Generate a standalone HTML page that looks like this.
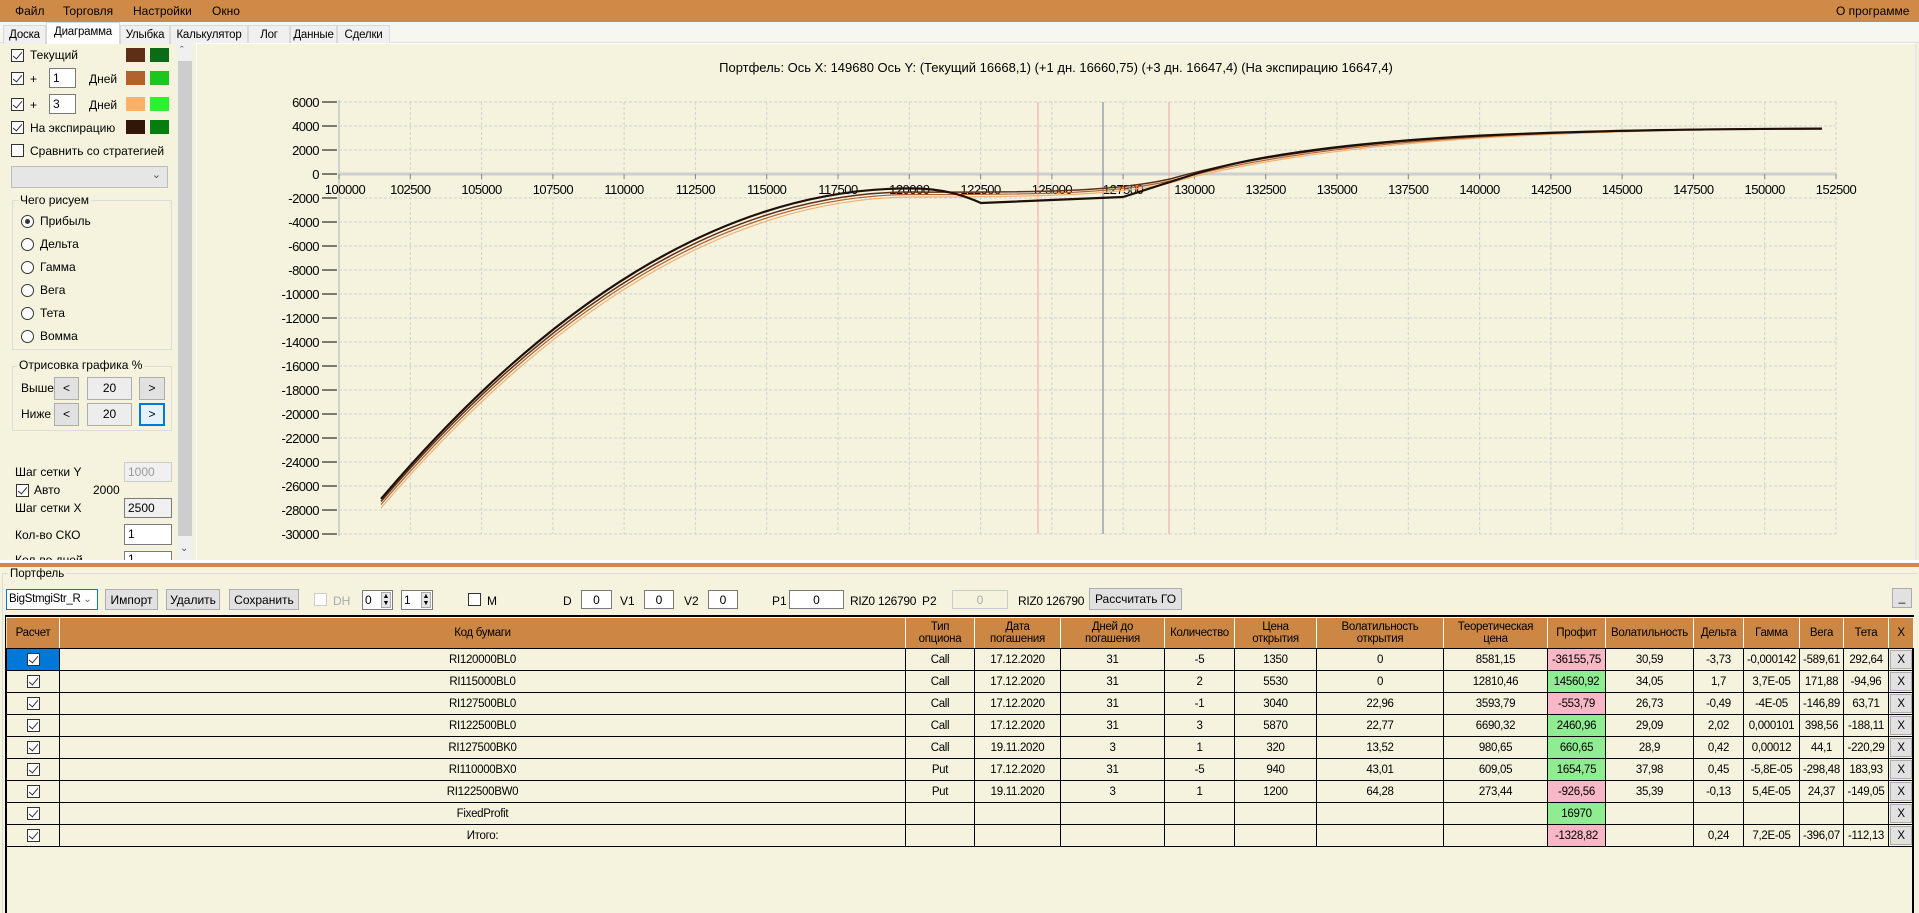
<!DOCTYPE html>
<html><head><meta charset="utf-8">
<style>
*{box-sizing:border-box;margin:0;padding:0}
body{width:1919px;height:913px;overflow:hidden;background:#F5F3DE;font-family:"Liberation Sans",sans-serif;font-size:12px;color:#000;position:relative}
.a{position:absolute;white-space:nowrap}
.menu{left:0;top:0;width:1919px;height:22px;background:#CF8A47}
.menu span{position:absolute;top:4px;font-size:12px}
.tabs{left:0;top:22px;width:1919px;height:21px;background:#F7F7F2;border-bottom:1px solid #ddd}
.tab{position:absolute;top:3px;height:19px;background:#F0F0F0;border:1px solid #d9d9d9;border-bottom:none;padding:3px 0 0;font-size:11.5px;text-align:center;letter-spacing:-0.2px;overflow:hidden}
.tab.act{top:0;height:22px;background:#fff;padding-top:3px}
.cb{position:absolute;width:13px;height:13px;border:1px solid #333;background:#fff}
.cb.k::after{content:"";position:absolute;left:3px;top:0px;width:4px;height:8px;border:solid #333;border-width:0 1.5px 1.5px 0;transform:rotate(40deg)}
.sw{position:absolute;width:19px;height:14px}
.in{position:absolute;background:#fff;border:1px solid #7a7a7a;font-size:12px;padding:2px 3px}
.rd{position:absolute;width:13px;height:13px;border:1px solid #333;border-radius:50%;background:#fff}
.btn{position:absolute;background:#E1E1E1;border:1px solid #ADADAD;text-align:center;font-size:12px;padding-top:3px}
.grp{position:absolute;border:1px solid #dcdcdc}
.lg{position:absolute;background:#F5F3DE;padding:0 2px;font-size:12px}
table{border-collapse:collapse;table-layout:fixed;font-size:11.5px;letter-spacing:-0.3px}
td,th{border:1px solid #000;text-align:center;height:22px;padding:0;overflow:hidden;white-space:nowrap}
th{background:#CD8744;font-weight:normal;height:31px;line-height:12px;border-color:#fff #fff #000 #f0d0b0}
td .c{display:inline-block;width:13px;height:13px;border:1px solid #333;background:#fff;position:relative;vertical-align:middle}
td .c::after{content:"";position:absolute;left:3px;top:0;width:4px;height:8px;border:solid #333;border-width:0 1.5px 1.5px 0;transform:rotate(40deg)}
.pk{background:#F7B7C4}.gr{background:#90EC90}
td.x{padding:1px}
td.x div{background:#E1E1E1;border:1px solid #ADADAD;height:19px;line-height:18px}
</style></head><body>
<div class="a menu"><span style="left:15px">Файл</span><span style="left:63px">Торговля</span><span style="left:133px">Настройки</span><span style="left:212px">Окно</span><span style="left:1836px">О программе</span></div>
<div class="a tabs">
<div class="tab" style="left:3px;width:43px">Доска</div>
<div class="tab act" style="left:46px;width:74px">Диаграмма</div>
<div class="tab" style="left:120px;width:50px">Улыбка</div>
<div class="tab" style="left:170px;width:78px">Калькулятор</div>
<div class="tab" style="left:248px;width:42px">Лог</div>
<div class="tab" style="left:290px;width:47px">Данные</div>
<div class="tab" style="left:337px;width:53px">Сделки</div>
</div>
<div class="a" style="left:196px;top:43px;width:1721px;height:518px;border:1px solid #fff;border-right:2px solid #e8e8e8"></div>
<div class="cb k" style="left:11px;top:49px"></div><div class="a" style="left:30px;top:48px">Текущий</div>
<div class="sw" style="left:126px;top:48px;background:#5E2F17"></div><div class="sw" style="left:150px;top:48px;background:#0C6B16"></div>
<div class="cb k" style="left:11px;top:72px"></div><div class="a" style="left:30px;top:72px">+</div>
<div class="in" style="left:49px;top:68px;width:27px;height:20px">1</div><div class="a" style="left:89px;top:72px">Дней</div>
<div class="sw" style="left:126px;top:71px;background:#B1622D"></div><div class="sw" style="left:150px;top:71px;background:#1DC51F"></div>
<div class="cb k" style="left:11px;top:98px"></div><div class="a" style="left:30px;top:98px">+</div>
<div class="in" style="left:49px;top:94px;width:27px;height:20px">3</div><div class="a" style="left:89px;top:98px">Дней</div>
<div class="sw" style="left:126px;top:97px;background:#FBB168"></div><div class="sw" style="left:150px;top:97px;background:#2BF22E"></div>
<div class="cb k" style="left:11px;top:121px"></div><div class="a" style="left:30px;top:121px">На экспирацию</div>
<div class="sw" style="left:126px;top:120px;background:#311707"></div><div class="sw" style="left:150px;top:120px;background:#067E0F"></div>
<div class="cb" style="left:11px;top:144px"></div><div class="a" style="left:30px;top:144px">Сравнить со стратегией</div>
<div class="a" style="left:11px;top:166px;width:157px;height:22px;background:#E6E6E6;border:1px solid #bdbdbd"><span style="position:absolute;right:6px;top:1px;font-size:11px;color:#555">&#8964;</span></div>
<div class="grp" style="left:12px;top:200px;width:160px;height:150px"></div><div class="lg" style="left:18px;top:193px">Чего рисуем</div>
<div class="rd" style="left:21px;top:215px"><div style="position:absolute;left:3px;top:3px;width:5px;height:5px;border-radius:50%;background:#333"></div></div><div class="a" style="left:40px;top:214px">Прибыль</div>
<div class="rd" style="left:21px;top:238px"></div><div class="a" style="left:40px;top:237px">Дельта</div>
<div class="rd" style="left:21px;top:261px"></div><div class="a" style="left:40px;top:260px">Гамма</div>
<div class="rd" style="left:21px;top:284px"></div><div class="a" style="left:40px;top:283px">Вега</div>
<div class="rd" style="left:21px;top:307px"></div><div class="a" style="left:40px;top:306px">Тета</div>
<div class="rd" style="left:21px;top:330px"></div><div class="a" style="left:40px;top:329px">Вомма</div>
<div class="grp" style="left:12px;top:366px;width:160px;height:65px"></div><div class="lg" style="left:17px;top:358px">Отрисовка графика %</div>
<div class="a" style="left:21px;top:381px">Выше</div>
<div class="btn" style="left:54px;top:377px;width:25px;height:23px">&lt;</div>
<div class="btn" style="left:87px;top:377px;width:45px;height:23px;background:#EDEDED">20</div>
<div class="btn" style="left:139px;top:377px;width:26px;height:23px">&gt;</div>
<div class="a" style="left:21px;top:407px">Ниже</div>
<div class="btn" style="left:54px;top:403px;width:25px;height:23px">&lt;</div>
<div class="btn" style="left:87px;top:403px;width:45px;height:23px;background:#EDEDED">20</div>
<div class="btn" style="left:139px;top:403px;width:26px;height:23px;border:2px solid #0078D7;background:#E5F1FB;padding-top:2px">&gt;</div>
<div class="a" style="left:15px;top:465px">Шаг сетки Y</div>
<div class="in" style="left:124px;top:462px;width:48px;height:20px;background:#F0F0F0;border-color:#ccc;color:#999">1000</div>
<div class="cb k" style="left:16px;top:484px"></div><div class="a" style="left:34px;top:483px">Авто</div><div class="a" style="left:93px;top:483px">2000</div>
<div class="a" style="left:15px;top:501px">Шаг сетки X</div>
<div class="in" style="left:124px;top:498px;width:48px;height:20px;background:#F0F0F0">2500</div>
<div class="a" style="left:15px;top:528px">Кол-во СКО</div>
<div class="in" style="left:124px;top:524px;width:48px;height:21px">1</div>
<div class="a" style="left:15px;top:553px;height:7px;overflow:hidden">Кол-во дней</div>
<div class="in" style="left:124px;top:551px;width:48px;height:9px;border-bottom:none;padding-top:0;overflow:hidden;line-height:14px">1</div>
<div class="a" style="left:177px;top:43px;width:16px;height:517px;background:#F0F0F0"></div>
<div class="a" style="left:178px;top:61px;width:14px;height:475px;background:#CDCDCD"></div>
<div class="a" style="left:180px;top:45px;font-size:11px;color:#555">&#710;</div>
<div class="a" style="left:180px;top:543px;font-size:10px;color:#555">&#8964;</div>
<div class="a" style="left:0;top:560px;width:1919px;height:3px;background:#fff"></div>
<div class="a" style="left:0;top:563px;width:1919px;height:4px;background:#CF8A47"></div>
<svg class="a" style="left:0;top:0" width="1919" height="560" font-family="Liberation Sans, sans-serif" font-size="13">
<text x="1056" y="72" text-anchor="middle" font-size="13">Портфель: Ось X: 149680 Ось Y:  (Текущий 16668,1)  (+1 дн. 16660,75)  (+3 дн. 16647,4)  (На экспирацию 16647,4)</text>
<g stroke="#d0d0d0" stroke-dasharray="3,2" stroke-width="1">
<path d="M339 102H1836M339 126H1836M339 150H1836M339 198H1836M339 222H1836M339 246H1836M339 270H1836M339 294H1836M339 318H1836M339 342H1836M339 366H1836M339 390H1836M339 414H1836M339 438H1836M339 462H1836M339 486H1836M339 510H1836M339 534H1836"/>
<path d="M410.3 102V534M481.6 102V534M552.9 102V534M624.1 102V534M695.4 102V534M766.7 102V534M838 102V534M909.3 102V534M980.6 102V534M1051.9 102V534M1123.1 102V534M1194.4 102V534M1265.7 102V534M1337 102V534M1408.3 102V534M1479.6 102V534M1550.9 102V534M1622.1 102V534M1693.4 102V534M1764.7 102V534M1836 102V534"/>
</g>
<path d="M339 174H1836" stroke="#cfcfcf" stroke-width="3"/>
<path d="M339 100V536" stroke="#d0d0d0" stroke-width="2"/>
<g stroke="#000"><path d="M322 102H337M322 126H337M322 150H337M322 174H337M322 198H337M322 222H337M322 246H337M322 270H337M322 294H337M322 318H337M322 342H337M322 366H337M322 390H337M322 414H337M322 438H337M322 462H337M322 486H337M322 510H337M322 534H337"/>
<path d="M339 174v5M410.3 174v5M481.6 174v5M552.9 174v5M624.1 174v5M695.4 174v5M766.7 174v5M838 174v5M909.3 174v5M980.6 174v5M1051.9 174v5M1123.1 174v5M1194.4 174v5M1265.7 174v5M1337 174v5M1408.3 174v5M1479.6 174v5M1550.9 174v5M1622.1 174v5M1693.4 174v5M1764.7 174v5M1836 174v5" stroke="#888"/></g>
<g text-anchor="end" letter-spacing="-0.5">
<text x="319" y="107">6000</text><text x="319" y="131">4000</text><text x="319" y="155">2000</text><text x="319" y="179">0</text><text x="319" y="203">-2000</text><text x="319" y="227">-4000</text><text x="319" y="251">-6000</text><text x="319" y="275">-8000</text><text x="319" y="299">-10000</text><text x="319" y="323">-12000</text><text x="319" y="347">-14000</text><text x="319" y="371">-16000</text><text x="319" y="395">-18000</text><text x="319" y="419">-20000</text><text x="319" y="443">-22000</text><text x="319" y="467">-24000</text><text x="319" y="491">-26000</text><text x="319" y="515">-28000</text><text x="319" y="539">-30000</text>
</g>
<g text-anchor="middle" letter-spacing="-0.5">
<text x="345" y="194">100000</text><text x="410.3" y="194">102500</text><text x="481.6" y="194">105000</text><text x="552.9" y="194">107500</text><text x="624.1" y="194">110000</text><text x="695.4" y="194">112500</text><text x="766.7" y="194">115000</text><text x="838" y="194">117500</text><text x="909.3" y="194">120000</text><text x="980.6" y="194">122500</text><text x="1051.9" y="194">125000</text><text x="1123.1" y="194">127500</text><text x="1194.4" y="194">130000</text><text x="1265.7" y="194">132500</text><text x="1337" y="194">135000</text><text x="1408.3" y="194">137500</text><text x="1479.6" y="194">140000</text><text x="1550.9" y="194">142500</text><text x="1622.1" y="194">145000</text><text x="1693.4" y="194">147500</text><text x="1764.7" y="194">150000</text><text x="1836" y="194">152500</text>
</g>
<path d="M1038 102V534M1169 102V534" stroke="#F0A0A0" stroke-width="1"/>
<path d="M1103 102V534" stroke="#6A7A9A" stroke-width="1"/>
<g fill="none" stroke-linejoin="round">
<path stroke="#F4B070" stroke-width="1.2" d="M381,508 Q648,197 915,197 C1060,197 1120,194 1170,183 C1230,166 1330,148 1480,138 C1600,131 1720,129 1822,129"/>
<path stroke="#B06030" stroke-width="1.2" d="M381,504.5 Q647,194.5 913,194.5 C1060,195 1120,192 1170,181 C1230,164 1330,146 1480,137 C1600,130 1720,129 1822,129"/>
<path stroke="#5E2F17" stroke-width="1.5" d="M381,501.5 Q646,192 911,192 C1060,193 1120,190 1170,179 C1230,162 1330,144 1480,136 C1600,130 1720,129 1822,128.5"/>
<path stroke="#1E1008" stroke-width="2.2" d="M381,498.9 Q645.2,188.4 909.4,188.4 C945,188.4 965,196 981,203 L1123,197 L1195,174 C1250,157 1340,143 1480,135.6 C1600,130 1720,129 1822,128.6"/>
</g>
</svg>
<div class="a" style="left:2px;top:573px;width:1915px;height:340px;border-top:1px solid #dcdcdc;border-left:1px solid #dcdcdc"></div>
<div class="a" style="left:8px;top:568px;background:#F5F3DE;padding:0 2px;font-size:11.5px">Портфель</div>
<div class="a" style="left:6px;top:589px;width:92px;height:21px;background:#fff;border:1px solid #0078D7;padding:3px 2px;font-size:11.5px;letter-spacing:-0.3px">BigStmgiStr_R <span style="color:#666;font-size:10px">&#8964;</span></div>
<div class="btn" style="left:105px;top:589px;width:53px;height:21px">Импорт</div>
<div class="btn" style="left:166px;top:589px;width:54px;height:21px">Удалить</div>
<div class="btn" style="left:229px;top:589px;width:70px;height:21px">Сохранить</div>
<div class="cb" style="left:314px;top:593px;border-color:#ccc"></div><div class="a" style="left:333px;top:594px;color:#aaa">DH</div>
<div class="in" style="left:362px;top:590px;width:31px;height:20px;padding:2px">0</div><div class="a" style="left:381px;top:592px;width:10px;height:16px;background:#e6e6e6;border:1px solid #aaa;font-size:7px;line-height:7px;text-align:center">▲<br>▼</div>
<div class="in" style="left:401px;top:590px;width:32px;height:20px;padding:2px">1</div><div class="a" style="left:421px;top:592px;width:10px;height:16px;background:#e6e6e6;border:1px solid #aaa;font-size:7px;line-height:7px;text-align:center">▲<br>▼</div>
<div class="cb" style="left:468px;top:593px"></div><div class="a" style="left:487px;top:594px">M</div>
<div class="a" style="left:563px;top:594px">D</div><div class="in" style="left:581px;top:590px;width:31px;height:19px;text-align:center;padding-top:2px">0</div>
<div class="a" style="left:620px;top:594px">V1</div><div class="in" style="left:644px;top:590px;width:30px;height:19px;text-align:center;padding-top:2px">0</div>
<div class="a" style="left:684px;top:594px">V2</div><div class="in" style="left:708px;top:590px;width:30px;height:19px;text-align:center;padding-top:2px">0</div>
<div class="a" style="left:772px;top:594px">P1</div><div class="in" style="left:789px;top:590px;width:55px;height:19px;text-align:center;padding-top:2px">0</div>
<div class="a" style="left:850px;top:594px;letter-spacing:-0.3px">RIZ0 126790</div><div class="a" style="left:922px;top:594px">P2</div>
<div class="in" style="left:952px;top:590px;width:56px;height:19px;text-align:center;padding-top:2px;border-color:#ccc;color:#aaa;background:#F5F3DE">0</div>
<div class="a" style="left:1018px;top:594px;letter-spacing:-0.3px">RIZ0 126790</div>
<div class="btn" style="left:1089px;top:588px;width:93px;height:22px">Рассчитать ГО</div>
<div class="btn" style="left:1892px;top:588px;width:20px;height:20px;line-height:10px">_</div>
<div class="a" style="left:5px;top:615px;width:1909px;height:298px;border:2px solid #000;border-bottom:none;background:#F5F3DE">
<table style="width:1907px;margin-left:-1px">
<colgroup><col style="width:53px"><col style="width:846px"><col style="width:69px"><col style="width:86px"><col style="width:104px"><col style="width:70px"><col style="width:82px"><col style="width:127px"><col style="width:104px"><col style="width:58px"><col style="width:88px"><col style="width:50px"><col style="width:56px"><col style="width:44px"><col style="width:45px"><col style="width:25px"></colgroup>
<tr><th>Расчет</th><th>Код бумаги</th><th>Тип<br>опциона</th><th>Дата<br>погашения</th><th>Дней до<br>погашения</th><th>Количество</th><th>Цена<br>открытия</th><th>Волатильность<br>открытия</th><th>Теоретическая<br>цена</th><th>Профит</th><th>Волатильность</th><th>Дельта</th><th>Гамма</th><th>Вега</th><th>Тета</th><th>X</th></tr>
<tr><td style="background:#0078D7"><span class="c"></span></td><td>RI120000BL0</td><td>Call</td><td>17.12.2020</td><td>31</td><td>-5</td><td>1350</td><td>0</td><td>8581,15</td><td class="pk">-36155,75</td><td>30,59</td><td>-3,73</td><td>-0,000142</td><td>-589,61</td><td>292,64</td><td class="x"><div>X</div></td></tr>
<tr><td><span class="c"></span></td><td>RI115000BL0</td><td>Call</td><td>17.12.2020</td><td>31</td><td>2</td><td>5530</td><td>0</td><td>12810,46</td><td class="gr">14560,92</td><td>34,05</td><td>1,7</td><td>3,7E-05</td><td>171,88</td><td>-94,96</td><td class="x"><div>X</div></td></tr>
<tr><td><span class="c"></span></td><td>RI127500BL0</td><td>Call</td><td>17.12.2020</td><td>31</td><td>-1</td><td>3040</td><td>22,96</td><td>3593,79</td><td class="pk">-553,79</td><td>26,73</td><td>-0,49</td><td>-4E-05</td><td>-146,89</td><td>63,71</td><td class="x"><div>X</div></td></tr>
<tr><td><span class="c"></span></td><td>RI122500BL0</td><td>Call</td><td>17.12.2020</td><td>31</td><td>3</td><td>5870</td><td>22,77</td><td>6690,32</td><td class="gr">2460,96</td><td>29,09</td><td>2,02</td><td>0,000101</td><td>398,56</td><td>-188,11</td><td class="x"><div>X</div></td></tr>
<tr><td><span class="c"></span></td><td>RI127500BK0</td><td>Call</td><td>19.11.2020</td><td>3</td><td>1</td><td>320</td><td>13,52</td><td>980,65</td><td class="gr">660,65</td><td>28,9</td><td>0,42</td><td>0,00012</td><td>44,1</td><td>-220,29</td><td class="x"><div>X</div></td></tr>
<tr><td><span class="c"></span></td><td>RI110000BX0</td><td>Put</td><td>17.12.2020</td><td>31</td><td>-5</td><td>940</td><td>43,01</td><td>609,05</td><td class="gr">1654,75</td><td>37,98</td><td>0,45</td><td>-5,8E-05</td><td>-298,48</td><td>183,93</td><td class="x"><div>X</div></td></tr>
<tr><td><span class="c"></span></td><td>RI122500BW0</td><td>Put</td><td>19.11.2020</td><td>3</td><td>1</td><td>1200</td><td>64,28</td><td>273,44</td><td class="pk">-926,56</td><td>35,39</td><td>-0,13</td><td>5,4E-05</td><td>24,37</td><td>-149,05</td><td class="x"><div>X</div></td></tr>
<tr><td><span class="c"></span></td><td>FixedProfit</td><td></td><td></td><td></td><td></td><td></td><td></td><td></td><td class="gr">16970</td><td></td><td></td><td></td><td></td><td></td><td class="x"><div>X</div></td></tr>
<tr><td><span class="c"></span></td><td>Итого:</td><td></td><td></td><td></td><td></td><td></td><td></td><td></td><td class="pk">-1328,82</td><td></td><td>0,24</td><td>7,2E-05</td><td>-396,07</td><td>-112,13</td><td class="x"><div>X</div></td></tr>
</table>
</div>
</body></html>
